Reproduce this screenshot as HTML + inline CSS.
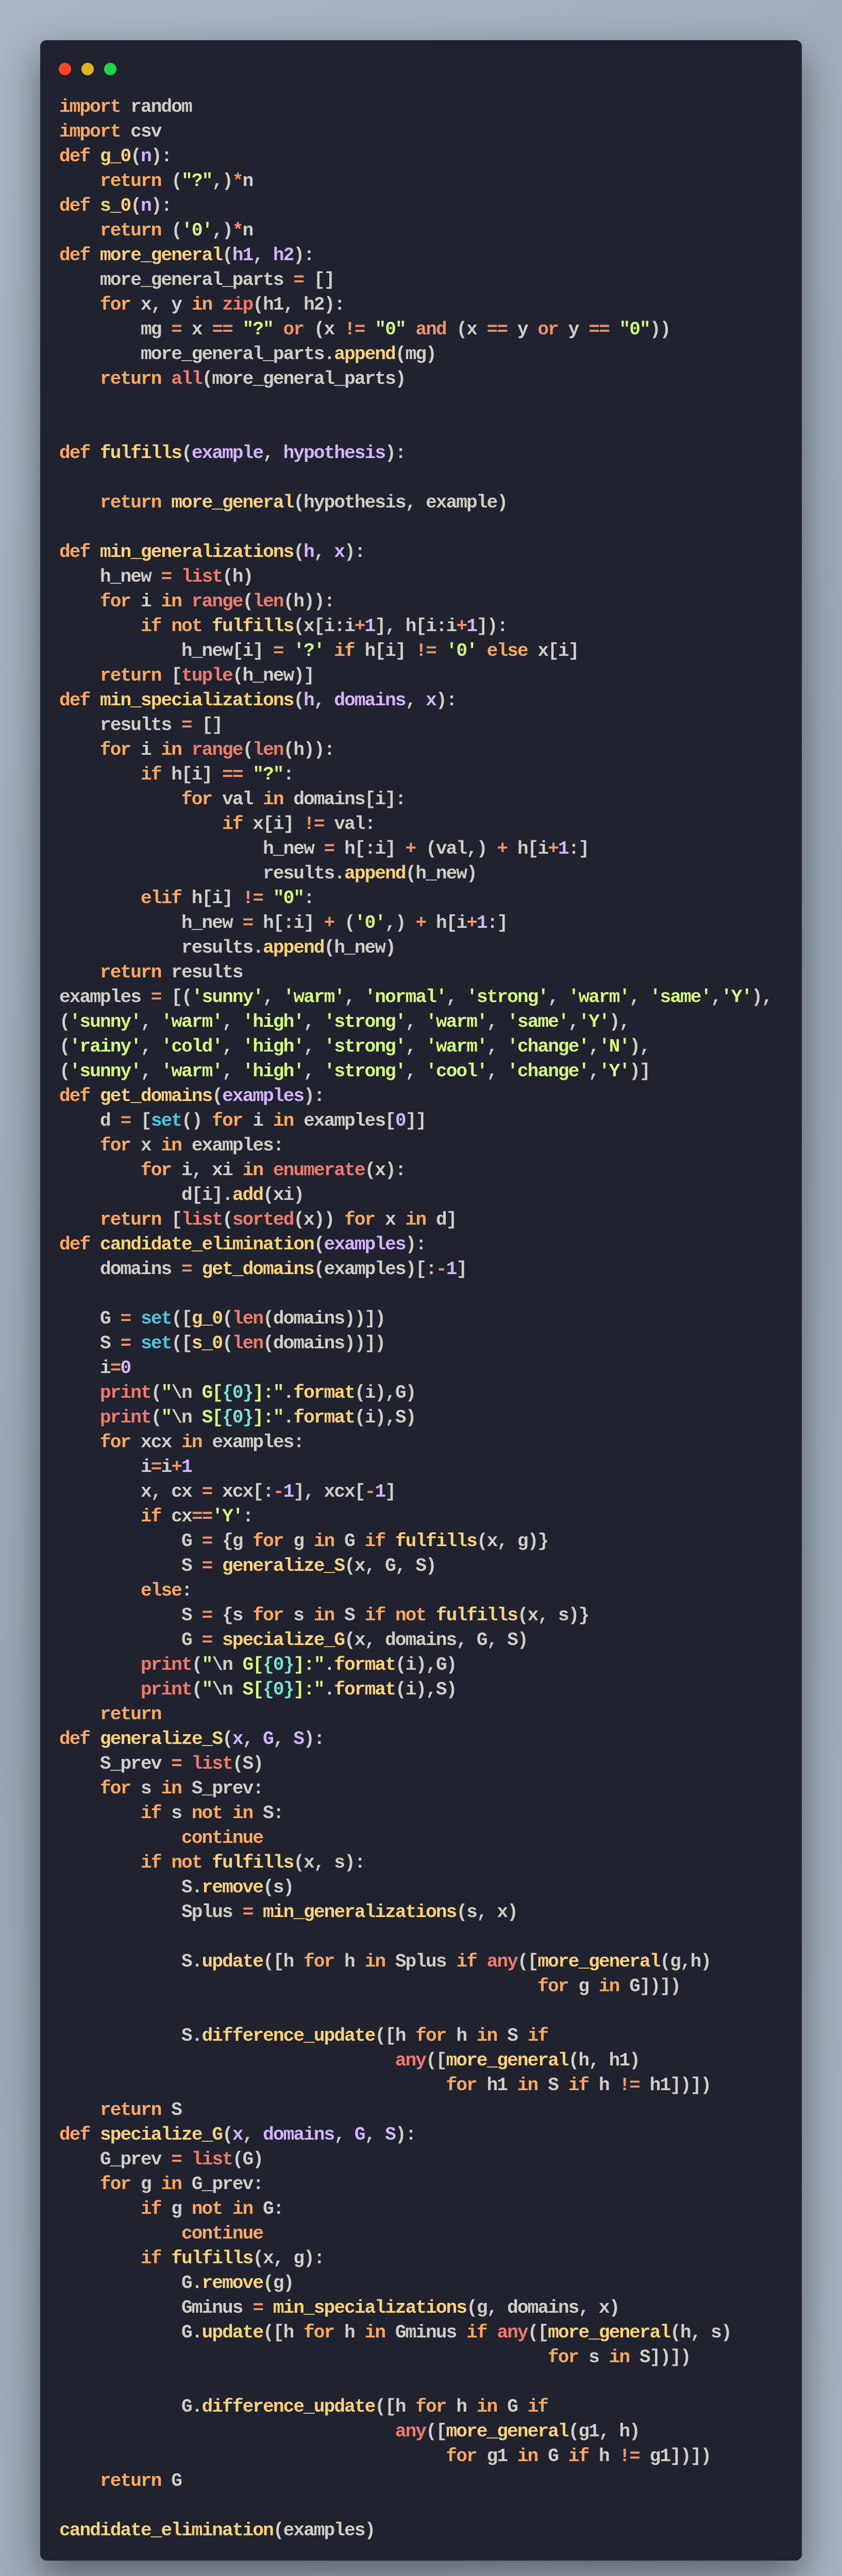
<!DOCTYPE html>
<html><head><meta charset="utf-8">
<style>
html,body{margin:0;padding:0;width:1634px;height:5048px;overflow:hidden}
body{background:linear-gradient(135deg,#a9b4c0,#9aa6b3 50%,#a6b1bd);position:relative}
.win{position:absolute;left:78px;top:78px;width:1478px;height:4892px;background:#20232f;border-radius:12px;box-shadow:0 30px 70px rgba(0,0,0,0.45)}
.dot{position:absolute;top:122px;width:24px;height:24px;border-radius:50%}
pre{position:absolute;left:115px;top:184px;margin:0;font-family:"Liberation Mono",monospace;font-weight:bold;font-size:36px;letter-spacing:-1.85px;line-height:48px;color:#d0cec6;white-space:pre}
.k{color:#ffa861}.o{color:#f2916a}.b{color:#f07a6c}.f{color:#ffd27a}.p{color:#d4b4ff}.s{color:#d5fa80}.c{color:#4fc6e0}.n{color:#d4b4ff}.t{color:#7fe0c8}
</style></head><body>
<div class="win"></div>
<div class="dot" style="left:114px;background:#ff4524"></div>
<div class="dot" style="left:158px;background:#dfb421"></div>
<div class="dot" style="left:202px;background:#23d14a"></div>
<pre><span class="k">import</span> random
<span class="k">import</span> csv
<span class="k">def</span> <span class="f">g_0</span>(<span class="p">n</span>):
    <span class="k">return</span> (<span class="s">"?"</span>,)<span class="o">*</span>n
<span class="k">def</span> <span class="f">s_0</span>(<span class="p">n</span>):
    <span class="k">return</span> (<span class="s">'0'</span>,)<span class="o">*</span>n
<span class="k">def</span> <span class="f">more_general</span>(<span class="p">h1</span>, <span class="p">h2</span>):
    more_general_parts <span class="o">=</span> []
    <span class="k">for</span> x, y <span class="k">in</span> <span class="b">zip</span>(h1, h2):
        mg <span class="o">=</span> x <span class="o">==</span> <span class="s">"?"</span> <span class="o">or</span> (x <span class="o">!=</span> <span class="s">"0"</span> <span class="o">and</span> (x <span class="o">==</span> y <span class="o">or</span> y <span class="o">==</span> <span class="s">"0"</span>))
        more_general_parts.<span class="f">append</span>(mg)
    <span class="k">return</span> <span class="b">all</span>(more_general_parts)


<span class="k">def</span> <span class="f">fulfills</span>(<span class="p">example</span>, <span class="p">hypothesis</span>):

    <span class="k">return</span> <span class="f">more_general</span>(hypothesis, example)

<span class="k">def</span> <span class="f">min_generalizations</span>(<span class="p">h</span>, <span class="p">x</span>):
    h_new <span class="o">=</span> <span class="b">list</span>(h)
    <span class="k">for</span> i <span class="k">in</span> <span class="b">range</span>(<span class="b">len</span>(h)):
        <span class="k">if</span> <span class="k">not</span> <span class="f">fulfills</span>(x[i:i<span class="o">+</span><span class="n">1</span>], h[i:i<span class="o">+</span><span class="n">1</span>]):
            h_new[i] <span class="o">=</span> <span class="s">'?'</span> <span class="k">if</span> h[i] <span class="o">!=</span> <span class="s">'0'</span> <span class="k">else</span> x[i]
    <span class="k">return</span> [<span class="b">tuple</span>(h_new)]
<span class="k">def</span> <span class="f">min_specializations</span>(<span class="p">h</span>, <span class="p">domains</span>, <span class="p">x</span>):
    results <span class="o">=</span> []
    <span class="k">for</span> i <span class="k">in</span> <span class="b">range</span>(<span class="b">len</span>(h)):
        <span class="k">if</span> h[i] <span class="o">==</span> <span class="s">"?"</span>:
            <span class="k">for</span> val <span class="k">in</span> domains[i]:
                <span class="k">if</span> x[i] <span class="o">!=</span> val:
                    h_new <span class="o">=</span> h[:i] <span class="o">+</span> (val,) <span class="o">+</span> h[i<span class="o">+</span><span class="n">1</span>:]
                    results.<span class="f">append</span>(h_new)
        <span class="k">elif</span> h[i] <span class="o">!=</span> <span class="s">"0"</span>:
            h_new <span class="o">=</span> h[:i] <span class="o">+</span> (<span class="s">'0'</span>,) <span class="o">+</span> h[i<span class="o">+</span><span class="n">1</span>:]
            results.<span class="f">append</span>(h_new)
    <span class="k">return</span> results
examples <span class="o">=</span> [(<span class="s">'sunny'</span>, <span class="s">'warm'</span>, <span class="s">'normal'</span>, <span class="s">'strong'</span>, <span class="s">'warm'</span>, <span class="s">'same'</span>,<span class="s">'Y'</span>),
(<span class="s">'sunny'</span>, <span class="s">'warm'</span>, <span class="s">'high'</span>, <span class="s">'strong'</span>, <span class="s">'warm'</span>, <span class="s">'same'</span>,<span class="s">'Y'</span>),
(<span class="s">'rainy'</span>, <span class="s">'cold'</span>, <span class="s">'high'</span>, <span class="s">'strong'</span>, <span class="s">'warm'</span>, <span class="s">'change'</span>,<span class="s">'N'</span>),
(<span class="s">'sunny'</span>, <span class="s">'warm'</span>, <span class="s">'high'</span>, <span class="s">'strong'</span>, <span class="s">'cool'</span>, <span class="s">'change'</span>,<span class="s">'Y'</span>)]
<span class="k">def</span> <span class="f">get_domains</span>(<span class="p">examples</span>):
    d <span class="o">=</span> [<span class="c">set</span>() <span class="k">for</span> i <span class="k">in</span> examples[<span class="n">0</span>]]
    <span class="k">for</span> x <span class="k">in</span> examples:
        <span class="k">for</span> i, xi <span class="k">in</span> <span class="b">enumerate</span>(x):
            d[i].<span class="f">add</span>(xi)
    <span class="k">return</span> [<span class="b">list</span>(<span class="b">sorted</span>(x)) <span class="k">for</span> x <span class="k">in</span> d]
<span class="k">def</span> <span class="f">candidate_elimination</span>(<span class="p">examples</span>):
    domains <span class="o">=</span> <span class="f">get_domains</span>(examples)[:<span class="o">-</span><span class="n">1</span>]

    G <span class="o">=</span> <span class="c">set</span>([<span class="f">g_0</span>(<span class="b">len</span>(domains))])
    S <span class="o">=</span> <span class="c">set</span>([<span class="f">s_0</span>(<span class="b">len</span>(domains))])
    i<span class="o">=</span><span class="n">0</span>
    <span class="b">print</span>(<span class="s">"</span>\n <span class="s">G[</span><span class="t">{0}</span><span class="s">]:"</span>.<span class="f">format</span>(i),G)
    <span class="b">print</span>(<span class="s">"</span>\n <span class="s">S[</span><span class="t">{0}</span><span class="s">]:"</span>.<span class="f">format</span>(i),S)
    <span class="k">for</span> xcx <span class="k">in</span> examples:
        i<span class="o">=</span>i<span class="o">+</span><span class="n">1</span>
        x, cx <span class="o">=</span> xcx[:<span class="o">-</span><span class="n">1</span>], xcx[<span class="o">-</span><span class="n">1</span>]
        <span class="k">if</span> cx<span class="o">==</span><span class="s">'Y'</span>:
            G <span class="o">=</span> {g <span class="k">for</span> g <span class="k">in</span> G <span class="k">if</span> <span class="f">fulfills</span>(x, g)}
            S <span class="o">=</span> <span class="f">generalize_S</span>(x, G, S)
        <span class="k">else</span>:
            S <span class="o">=</span> {s <span class="k">for</span> s <span class="k">in</span> S <span class="k">if</span> <span class="k">not</span> <span class="f">fulfills</span>(x, s)}
            G <span class="o">=</span> <span class="f">specialize_G</span>(x, domains, G, S)
        <span class="b">print</span>(<span class="s">"</span>\n <span class="s">G[</span><span class="t">{0}</span><span class="s">]:"</span>.<span class="f">format</span>(i),G)
        <span class="b">print</span>(<span class="s">"</span>\n <span class="s">S[</span><span class="t">{0}</span><span class="s">]:"</span>.<span class="f">format</span>(i),S)
    <span class="k">return</span>
<span class="k">def</span> <span class="f">generalize_S</span>(<span class="p">x</span>, <span class="p">G</span>, <span class="p">S</span>):
    S_prev <span class="o">=</span> <span class="b">list</span>(S)
    <span class="k">for</span> s <span class="k">in</span> S_prev:
        <span class="k">if</span> s <span class="k">not</span> <span class="k">in</span> S:
            <span class="k">continue</span>
        <span class="k">if</span> <span class="k">not</span> <span class="f">fulfills</span>(x, s):
            S.<span class="f">remove</span>(s)
            Splus <span class="o">=</span> <span class="f">min_generalizations</span>(s, x)

            S.<span class="f">update</span>([h <span class="k">for</span> h <span class="k">in</span> Splus <span class="k">if</span> <span class="b">any</span>([<span class="f">more_general</span>(g,h)
                                               <span class="k">for</span> g <span class="k">in</span> G])])

            S.<span class="f">difference_update</span>([h <span class="k">for</span> h <span class="k">in</span> S <span class="k">if</span>
                                 <span class="b">any</span>([<span class="f">more_general</span>(h, h1)
                                      <span class="k">for</span> h1 <span class="k">in</span> S <span class="k">if</span> h <span class="o">!=</span> h1])])
    <span class="k">return</span> S
<span class="k">def</span> <span class="f">specialize_G</span>(<span class="p">x</span>, <span class="p">domains</span>, <span class="p">G</span>, <span class="p">S</span>):
    G_prev <span class="o">=</span> <span class="b">list</span>(G)
    <span class="k">for</span> g <span class="k">in</span> G_prev:
        <span class="k">if</span> g <span class="k">not</span> <span class="k">in</span> G:
            <span class="k">continue</span>
        <span class="k">if</span> <span class="f">fulfills</span>(x, g):
            G.<span class="f">remove</span>(g)
            Gminus <span class="o">=</span> <span class="f">min_specializations</span>(g, domains, x)
            G.<span class="f">update</span>([h <span class="k">for</span> h <span class="k">in</span> Gminus <span class="k">if</span> <span class="b">any</span>([<span class="f">more_general</span>(h, s)
                                                <span class="k">for</span> s <span class="k">in</span> S])])

            G.<span class="f">difference_update</span>([h <span class="k">for</span> h <span class="k">in</span> G <span class="k">if</span>
                                 <span class="b">any</span>([<span class="f">more_general</span>(g1, h)
                                      <span class="k">for</span> g1 <span class="k">in</span> G <span class="k">if</span> h <span class="o">!=</span> g1])])
    <span class="k">return</span> G

<span class="f">candidate_elimination</span>(examples)</pre>
</body></html>
